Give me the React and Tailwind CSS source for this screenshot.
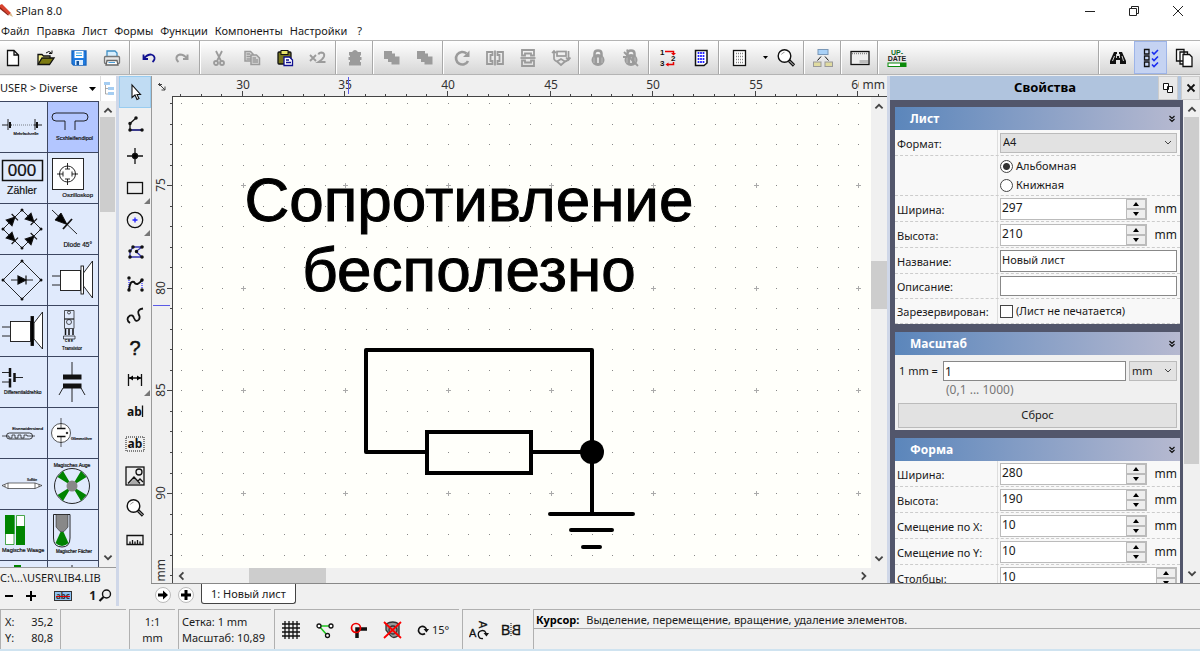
import { useState } from "react";

/* ================= SHARED ================= */

function Icon({ size = 20, children }) {
    return (
        <svg
            width={size}
            height={size}
            viewBox="0 0 20 20"
            fill="none"
            stroke="#111"
            strokeWidth="1.3"
            aria-hidden="true"
            className="shrink-0"
        >
            {children}
        </svg>
    );
}

const CHEVRONS = {
    up: "M2 7 L5 4 L8 7",
    down: "M2 3 L5 6 L8 3",
    left: "M7 2 L4 5 L7 8",
    right: "M4 2 L7 5 L4 8",
};

function Chevron({ dir, size = 12, width = 1.5 }) {
    return (
        <svg width={size} height={size} viewBox="0 0 10 10" fill="none" stroke="#444" strokeWidth={width} aria-hidden="true">
            <path d={CHEVRONS[dir]} />
        </svg>
    );
}

/* ================= TOOLBAR ICONS ================= */

const G = "#9b9b9b";

const magnifier = (
    <>
        <circle cx="8.5" cy="8" r="6.3" fill="#fff" strokeWidth="1.4" />
        <path d="M5.5 6.5 Q6.5 4.5 8.5 4.3" stroke="#999" strokeWidth="1" />
        <path d="M13 12.5 L18 17.5" strokeWidth="3.2" />
        <path d="M13.6 13.1 L17.6 17.1" stroke="#ddd" strokeWidth="1" />
    </>
);

const lock = (
    <>
        <path d="M6.500 8 V5.500 Q6.500 2.500 10 2.500 Q13.500 2.500 13.500 5.500 V8" stroke={G} strokeWidth="2.500" />
        <ellipse cx="10" cy="12" rx="6.500" ry="6" fill={G} stroke="none" />
        <path d="M6 9.500 V15 M14 9.500 V15" stroke="#c4c4c4" strokeWidth="0.800" />
        <path d="M10 9.500 V15" stroke="#f2f2f2" strokeWidth="1.500" />
    </>
);

const TOOLS_LEFT = [
    [
        ["Новый", <path d="M4.500 2.500 H11 L15.500 7 V17.500 H4.500 Z M11 2.500 V7 H15.500" fill="#fff" />],
        ["Открыть", (
            <>
                <path d="M2 16 V6.500 H6 L7.500 8 H14 V10" fill="#f4f08a" />
                <path d="M2 16.500 L6 10 H18 L13.500 16.500 Z" fill="#7c7a10" />
                <path d="M10 5 Q13 2 15.500 5 M16 2.500 V5.500 H13" strokeWidth="1" />
            </>
        )],
        ["Сохранить", (
            <>
                <path d="M3 3 H17 V17 H4.500 L3 15.500 Z" fill="#1f7be0" stroke="#1866c0" />
                <rect x="5.500" y="3" width="9" height="7" fill="#fff" stroke="none" />
                <path d="M7 5 H13 M7 7.500 H13" stroke="#2ba0e8" strokeWidth="1" />
                <rect x="6" y="12" width="8" height="5" fill="#d9ecff" stroke="none" />
                <rect x="7.500" y="13" width="2.500" height="4" fill="#14539c" stroke="none" />
            </>
        )],
        ["Печать", (
            <>
                <path d="M5 9 V3 H13 L15 5 V9 Z" fill="#d7efff" stroke="#3f8fc4" />
                <rect x="2.500" y="8.500" width="15" height="7" rx="1" fill="#e6e6e6" stroke="#777" />
                <path d="M5 12.500 H15 L16 17 H4 Z" fill="#fff" stroke="#666" />
                <path d="M6.500 14.500 H13" stroke="#4aa0dc" strokeWidth="1" />
            </>
        )],
    ],
    [
        ["Отменить", <path d="M4.500 6.500 V11 H9 M5 10.500 Q8 6.500 12 6.500 Q16 7.500 15.500 11 Q15.200 12.500 13.500 14" stroke="#101090" strokeWidth="1.800" />],
        ["Повторить", <path d="M15.500 6.500 V11 H11 M15 10.500 Q12 6.500 8 6.500 Q4 7.500 4.500 11 Q4.800 12.500 6.500 14" stroke={G} strokeWidth="2" />],
    ],
    [
        ["Вырезать", (
            <g stroke={G} strokeWidth="1.800">
                <path d="M7 3 L12 13 M13 3 L8 13" />
                <circle cx="7" cy="15" r="2" />
                <circle cx="13" cy="15" r="2" />
            </g>
        )],
        ["Копировать", (
            <g stroke={G} fill="#d8d8d8" strokeWidth="1.500">
                <path d="M3 3.500 H8.500 L11 6 V13 H3 Z" />
                <path d="M4.500 6 H8 M4.500 8.500 H9 M4.500 11 H9" />
                <path d="M9 7 H14.500 L17.500 10 V16.500 H9 Z" />
                <path d="M10.500 10 H14 M10.500 12 H16 M10.500 14 H16" />
            </g>
        )],
        ["Вставить", (
            <>
                <rect x="3" y="4" width="13" height="12" rx="1" fill="#77751c" />
                <rect x="6" y="2.500" width="7" height="4" fill="#e8e46a" strokeWidth="1" />
                <path d="M9 9 H14.500 L17.500 12 V17.500 H9 Z" fill="#fff" stroke="#101090" />
                <path d="M11 12 H14 M11 14.500 H16" stroke="#101090" />
            </>
        )],
        ["Дублировать", (
            <>
                <path d="M2 7 L8 13 M8 7 L2 13" stroke={G} strokeWidth="1.800" />
                <path d="M10.500 6.500 Q11 4.500 13.500 4.500 Q17 5 16 8.500 Q15 11 10.500 14 H17.500" stroke={G} strokeWidth="2" />
            </>
        )],
    ],
    [
        ["Компонент", <path d="M7 4 Q10 0 13 4 H16 V7.500 H15 V9 H16.500 V12 H15 V14 H16 V17.500 H4 V14 H5 V12 H3.500 V9 H5 V7.500 H4 V4 Z" fill={G} stroke="none" />],
    ],
    [
        ["На передний план", <path d="M2 3 H10 V5.500 H13 V8.500 H17.500 V16.500 H9.500 V14 H6 V11 H2 Z" fill={G} stroke="none" />],
        ["На задний план", <path d="M2 3 H10 V5.500 H13 V8.500 H17.500 V16.500 H9.500 V14 H6 V11 H2 Z" fill={G} stroke="none" />],
    ],
    [
        ["Повернуть", (
            <>
                <path d="M16 13 A6.300 6.300 0 1 1 14.500 5.500" stroke={G} strokeWidth="2.600" />
                <path d="M17.500 2.500 V9 H11 Z" fill={G} stroke="none" />
            </>
        )],
        ["Отразить по горизонтали", (
            <g stroke={G} strokeWidth="1.800">
                <path d="M2 4 H7.500 V7 H5.500 V13 H7.500 V16 H2 Z" />
                <path d="M18 4 H12.500 V7 H14.500 V13 H12.500 V16 H18 Z" />
                <path d="M10 2.500 V17.500" />
            </g>
        )],
        ["Отразить по вертикали", (
            <g stroke={G} strokeWidth="1.800">
                <path d="M4 2 V7.500 H7 V5.500 H13 V7.500 H16 V2 Z" />
                <path d="M4 18 V12.500 H7 V14.500 H13 V12.500 H16 V18 Z" />
                <path d="M2.500 10 H17.500" />
            </g>
        )],
        ["Выравнивание", (
            <g stroke={G} strokeWidth="1.700">
                <rect x="6" y="3.500" width="9" height="4.500" />
                <path d="M6 13.500 L10 11 L14 13.500 L10 17 Z" />
                <path d="M3 3 V11 Q4 13.500 7 13.500 M17.500 3 V11 Q16 13.500 13 13.500 M1 5 L3 3 L5 5 M15 9.500 L17.500 12 L19.500 9.500" />
            </g>
        )],
    ],
    [
        ["Закрепить", lock],
        ["Открепить", (
            <>
                {lock}
                <path d="M3 4 L17 18 M2 9 H6 M6 1.500 L7 5" stroke={G} strokeWidth="1.800" />
            </>
        )],
    ],
    [
        ["Перенумеровать", (
            <>
                <path d="M7 3.500 H15.500 V6 M15.500 14 V16.500 H9" stroke="#e60000" strokeWidth="1.500" />
                <path d="M13 5 H18 L15.500 7.500 Z M10.500 14.500 V18.500 L7.500 16.500 Z" fill="#e60000" stroke="none" />
                <g fill="#111" stroke="none" fontSize="8" fontWeight="700" fontFamily="Liberation Sans, sans-serif">
                    <text x="2" y="7">1</text>
                    <text x="13" y="13">2</text>
                    <text x="2" y="18">3</text>
                </g>
            </>
        )],
        ["Список", (
            <>
                <path d="M4.500 2.500 H16 V15 L13 17.500 H4.500 Z" fill="#fff" strokeWidth="1.500" />
                <path d="M7.500 4 V16 M10 4 V16 M12.500 4 V16" stroke="#2222ff" strokeWidth="1.700" strokeDasharray="2 1" />
            </>
        )],
    ],
];

const TOOLS_MID = [
    ["Структура", (
        <>
            <rect x="5" y="1.500" width="10" height="5" fill="#a9d1f7" stroke="#7a98b8" strokeWidth="1" />
            <path d="M8 8.500 L4.500 12.500 M12 8.500 L15.500 12.500" strokeWidth="1" />
            <rect x="0.500" y="14" width="7.500" height="4.500" fill="#e0dba0" stroke="#999" strokeWidth="1" />
            <rect x="12" y="14" width="7.500" height="4.500" fill="#e0dba0" stroke="#999" strokeWidth="1" />
        </>
    )],
    ["Лист", (
        <>
            <rect x="1" y="3.500" width="18" height="13" fill="#eee" />
            <path d="M2 5.500 H18" stroke="#888" strokeDasharray="1 1" />
            <rect x="9.500" y="12" width="8.500" height="3.500" fill="#bbb" stroke="none" />
        </>
    )],
    ["Обновление", (
        <>
            <g stroke="none" fontSize="7" fontWeight="700" fontFamily="Liberation Sans, sans-serif" textAnchor="middle">
                <text x="10" y="6.500" fill="#0b6b1c">UP-</text>
                <text x="10" y="13" fill="#222">DATE</text>
            </g>
            <rect x="1" y="15" width="18" height="3.500" fill="#fff" stroke="#0a8a0a" strokeWidth="1" />
            <rect x="13" y="15" width="6" height="3.500" fill="#0a8a0a" stroke="none" />
        </>
    )],
];

function ToolButton({ label, active, children }) {
    return (
        <button
            type="button"
            aria-label={label}
            className={
                active
                    ? "flex w-[33px] shrink-0 items-center justify-center border border-[#9db4e8] bg-[#c5d3f2]"
                    : "flex w-[33px] shrink-0 items-center justify-center"
            }
        >
            {children}
        </button>
    );
}

function Separator() {
    return <div className="mx-px w-[2px] shrink-0 border-l border-[#a8a8a8] bg-white" />;
}

function Toolbar() {
    return (
        <div className="flex h-[35px] shrink-0 items-stretch overflow-hidden border-y border-[#b4b4b4] bg-gradient-to-b from-white to-[#d6d6d6]">
            <div className="-ml-1 flex items-stretch">
                {TOOLS_LEFT.map((group, i) => (
                    <div key={i} className="flex">
                        {group.map(([label, drawing]) => (
                            <ToolButton key={label} label={label}>
                                <Icon>{drawing}</Icon>
                            </ToolButton>
                        ))}
                        <Separator />
                    </div>
                ))}
                <ToolButton label="Сетка">
                    <Icon>
                        <rect x="5.500" y="2.500" width="12" height="15" fill="#fff" />
                        <path d="M8 5.500 H16 M8 8.500 H16 M8 11.500 H16 M8 14.500 H16" stroke="#888" strokeDasharray="1 1" />
                    </Icon>
                </ToolButton>
                <button type="button" aria-label="Варианты сетки" className="flex w-[15px] items-center justify-end pr-px">
                    <svg width="5" height="3" viewBox="0 0 5 3" aria-hidden="true"><path d="M0 0 H5 L2.500 3 Z" /></svg>
                </button>
                <ToolButton label="Масштаб">
                    <Icon>{magnifier}</Icon>
                </ToolButton>
                {TOOLS_MID.map(([label, drawing]) => (
                    <div key={label} className="flex">
                        <Separator />
                        <ToolButton label={label}>
                            <Icon>{drawing}</Icon>
                        </ToolButton>
                    </div>
                ))}
            </div>
            <div className="ml-auto flex items-stretch">
                <Separator />
                <ToolButton label="Найти">
                    <Icon>
                        <path d="M6 4 H9 V8 H11 V4 H14 L18 13 V16 H12 V12 H8 V16 H2 V13 Z" fill="#111" stroke="none" />
                        <path d="M4.500 13 L6.500 8 M8.500 6 V10 M11.500 6 V10 M14 8 L15.500 13" stroke="#fff" strokeWidth="0.800" />
                    </Icon>
                </ToolButton>
                <ToolButton label="Свойства" active>
                    <Icon>
                        <path d="M3.500 1.500 H8 V6 H3.500 Z M3.500 8 H8 V12 H3.500 Z M3.500 14 H8 V18.500 H3.500 Z" />
                        <path d="M11 4 L13 6 L17 2 M11 10.500 L13 12.500 L17 8.500 M11 16.500 L13 18.500 L17 14.500" stroke="#1a2cf0" strokeWidth="1.600" />
                    </Icon>
                </ToolButton>
                <ToolButton label="Листы">
                    <Icon>
                        <path d="M2.500 1.500 H10 V13 H2.500 Z M6 4 H13.500 V16 H6 Z" fill="#fff" />
                        <path d="M9 6.500 H15.500 L18 9 V18.500 H9 Z" fill="#fff" />
                    </Icon>
                </ToolButton>
            </div>
        </div>
    );
}

/* ================= COMPONENT LIBRARY ================= */

function T({ x, y, size, anchor = "start", children }) {
    return (
        <text x={x} y={y} fontSize={size} textAnchor={anchor} fill="#111" stroke="#111" strokeWidth="0.2">
            {children}
        </text>
    );
}

const diode = <path d="M-4 -4 L4 0 L-4 4 Z M4 -4.500 V4.500" fill="#000" strokeWidth="1.200" />;

const LIBRARY = [
    ["Mehrfachzelle", (
        <>
            <path d="M2 23 H8 M8 17 V28 M10 23 H12 M34 23 H36 M35 17 V28 M38 23 H42" />
            <path d="M10 20 V26 M37 20 V26" strokeWidth="2" />
            <path d="M13 23 H34" strokeDasharray="1 1" strokeWidth="0.500" />
            <T x="26" y="33" size="4" anchor="middle">Mehrfachzelle</T>
        </>
    )],
    ["Scxhleifendipol", (
        <>
            <path d="M17 28 V19 H8 A4 4 0 0 1 8 11 H36 A4 4 0 0 1 36 19 H27 V28" />
            <T x="45" y="38" size="5.500" anchor="end">Scxhleifendipol</T>
        </>
    )],
    ["Zähler", (
        <>
            <rect x="2.500" y="7.500" width="40" height="20" strokeWidth="1.500" />
            <T x="22" y="23" size="17" anchor="middle">000</T>
            <T x="22" y="41" size="10.500" anchor="middle">Zähler</T>
        </>
    )],
    ["Oszilloskop", (
        <>
            <rect x="4.500" y="5.500" width="31" height="31" fill="#fff" />
            <circle cx="19.500" cy="21" r="8" />
            <path d="M19.500 10 V16 M19.500 26 V32 M9 21 H15 M24 21 H30 M17 16 H22 M17 26 H22 M15 18.500 V23.500 M24 18.500 V23.500" />
            <T x="45" y="44" size="6" anchor="end">Oszilloskop</T>
        </>
    )],
    ["Brückengleichrichter", (
        <>
            <path d="M22 6 L41 25 L22 44 L3 25 Z" />
            <g transform="translate(12 16) rotate(-45)">{diode}</g>
            <g transform="translate(31 15) rotate(45)">{diode}</g>
            <g transform="translate(12 34) rotate(45)">{diode}</g>
            <g transform="translate(31 35) rotate(-45)">{diode}</g>
            <path d="M22 6 h0 M41 25 h0 M22 44 h0 M3 25 h0" strokeWidth="3" strokeLinecap="round" />
        </>
    )],
    ["Diode 45°", (
        <>
            <path d="M4 6 L29 30" />
            <path d="M13 9 L7 16 L19 20.500 Z" fill="#000" />
            <path d="M24 15 L15 25" strokeWidth="1.800" />
            <T x="44" y="43" size="6.500" anchor="end">Diode 45°</T>
        </>
    )],
    ["Gleichrichter", (
        <>
            <path d="M22 6 L41 25 L22 44 L3 25 Z M11 25 H33" />
            <g transform="translate(22 25)">{diode}</g>
            <path d="M22 6 h0 M41 25 h0 M22 44 h0 M3 25 h0" strokeWidth="3" strokeLinecap="round" />
        </>
    )],
    ["Lautsprecher", (
        <g fill="#fff">
            <path d="M4 21 H12 M4 30 H12" />
            <rect x="12.500" y="15.500" width="20" height="20" />
            <rect x="33" y="11" width="2.500" height="28" />
            <path d="M35.500 18 L44.500 6 V43 L35.500 31 Z" />
        </g>
    )],
    ["Hochtöner", (
        <g fill="#fff">
            <path d="M2 21 H10 M2 30 H10" />
            <rect x="10.500" y="15.500" width="20" height="20" />
            <path d="M34 17 L42.500 6 V43 L34 33 Z" />
            <rect x="31" y="10.500" width="2.500" height="29" fill="#000" />
        </g>
    )],
    ["Transistor", (
        <>
            <path d="M16.500 4.500 H26 V13 H16.500 Z M16.500 13 H26 V22.500 H16.500 Z M15.500 30 H27 V33 H15.500 Z" strokeWidth="0.700" />
            <circle cx="21" cy="16" r="2.500" strokeWidth="0.700" />
            <circle cx="21" cy="6.500" r="1.500" strokeWidth="0.700" />
            <path d="M17.500 23 V29 M21 23 V29 M25 23 V29" strokeWidth="1.500" />
            <T x="21" y="36" size="3" anchor="middle">C B E</T>
            <T x="24" y="44" size="4.500" anchor="middle">Transistor</T>
        </>
    )],
    ["Differentialdrehko", (
        <>
            <path d="M2 15.500 H9 M2 25 H9 M15 20.500 H23" />
            <path d="M10 11 V20 M10 21.500 V30.500 M14.500 16 V25" strokeWidth="2.500" />
            <T x="4" y="37" size="4.800">Differentialdrehko</T>
        </>
    )],
    ["Durchführung", (
        <>
            <path d="M24 5 V18 M24 30 V45 M15 31 L11 38 M33 31 L37 38" />
            <path d="M15 20 H33.500 M15 29 H33.500" strokeWidth="5" />
        </>
    )],
    ["Eisenwiderstand", (
        <>
            <rect x="6.500" y="25" width="26" height="6" rx="3" strokeWidth="0.800" />
            <path d="M2 28 H9 V30 H12 V27 H15 V30 H18 V27 H21 V30 H24 V27 H27 V28 H35" strokeWidth="0.700" />
            <T x="43" y="22" size="4.200" anchor="end">Eisenwiderstand</T>
        </>
    )],
    ["Glimmröhre", (
        <>
            <circle cx="13" cy="25" r="9.500" fill="#fff" strokeWidth="0.700" />
            <path d="M13 10 V20 M13 29 V39" strokeWidth="0.700" />
            <path d="M9 20.500 H17.500 M9 28.500 H17.500" strokeWidth="1.600" />
            <circle cx="19" cy="25" r="0.800" fill="#000" />
            <T x="44" y="32" size="4" anchor="end">Glimmröhre</T>
        </>
    )],
    ["Soffitte", (
        <>
            <path d="M8 24 H35 V29.500 H8 Z M8 24 L2 26.500 L8 29.500 M35 24 L42 26.500 L35 29.500 M5 25.500 V28 M39 25.500 V28" fill="#fff" strokeWidth="0.600" />
            <T x="32" y="22" size="3.200" anchor="middle">Soffitte</T>
        </>
    )],
    ["Magisches Auge", (
        <>
            <circle cx="24" cy="27" r="17.500" />
            <path d="M24 27 L9.500 18 L15 12 Z M24 27 L33 12 L38.500 18 Z M24 27 L38.500 36 L33 42 Z M24 27 L15 42 L9.500 36 Z" fill="#008400" stroke="none" />
            <circle cx="24" cy="27" r="5.500" fill="#888" stroke="none" />
            <T x="24" y="8" size="5" anchor="middle">Magisches Auge</T>
        </>
    )],
    ["Magische Waage", (
        <>
            <path d="M5.500 5.500 H14 V34.500 H5.500 Z M16.500 5.500 H24.500 V34.500 H16.500 Z" fill="#fff" stroke="#008400" strokeWidth="0.700" />
            <path d="M5 5 H14.500 V24 H5 Z M16 16 H25 V35 H16 Z" fill="#008400" stroke="none" />
            <T x="2" y="42" size="5.500">Magische Waage</T>
        </>
    )],
    ["Magischer Fächer", (
        <>
            <path d="M5.500 4.500 H22 V28 Q22 37 14 37 Q5.500 37 5.500 28 Z" />
            <path d="M8 4.500 H20 V17 L16 21.500 H12 L8 17 Z" fill="#888" strokeWidth="0.500" />
            <path d="M12.500 22 H15.500 L20.500 33 Q14 39 7.500 33 Z" fill="#008400" stroke="none" />
            <T x="8" y="43" size="4.500">Magischer Fächer</T>
        </>
    )],
    ["Magisches Band", <path d="M14 4 H21 V40 H14 Z" fill="#008400" stroke="none" />],
    ["Antenne", <path d="M24 4 V20" />],
];

function LibraryPanel() {
    return (
        <aside className="flex w-[116px] shrink-0 flex-col">
            <div className="flex h-[25px] shrink-0 items-stretch bg-white">
                <button type="button" className="flex flex-1 items-center justify-between overflow-hidden pr-1 text-[11px] whitespace-nowrap">
                    USER &gt; Diverse
                    <svg width="7" height="4" viewBox="0 0 7 4" aria-hidden="true"><path d="M0 0 H7 L3.500 4 Z" /></svg>
                </button>
                <button type="button" aria-label="Дерево библиотек" className="flex w-4 items-center justify-center border-l border-[#ddd]">
                    <svg width="12" height="14" viewBox="0 0 12 14" fill="#a5cdf2" aria-hidden="true">
                        <path d="M1 0 H7 V3 H1 Z M5 5 H11 V8 H5 Z M5 10 H11 V13 H5 Z" />
                        <path d="M2.500 3 V12 H5 M2.500 6.500 H5" stroke="#888" fill="none" strokeWidth="0.700" />
                    </svg>
                </button>
            </div>
            <div className="flex min-h-0 flex-1 border-b border-[#999]">
                <div className="grid flex-1 auto-rows-[51px] grid-cols-[48px_1fr] overflow-hidden bg-[#e0eafc]">
                    {LIBRARY.map(([name, drawing], i) => (
                        <button
                            key={name}
                            type="button"
                            aria-label={name}
                            className={
                                i === 1
                                    ? "overflow-hidden border-t border-r border-[#3c4660] bg-[#b3c6ff]"
                                    : "overflow-hidden border-t border-r border-[#3c4660]"
                            }
                        >
                            <svg
                                width="48"
                                height="50"
                                viewBox="0 0 48 50"
                                fill="none"
                                stroke="#111"
                                strokeWidth="0.900"
                                className="font-['Liberation_Sans',sans-serif]"
                            >
                                {drawing}
                            </svg>
                        </button>
                    ))}
                </div>
                <div className="flex w-[17px] flex-col items-center bg-[#f0f0f0] py-[3px]">
                    <Chevron dir="up" />
                    <div className="mt-px h-[95px] w-[15px] bg-[#cdcdcd]" />
                    <div className="mt-auto flex"><Chevron dir="down" /></div>
                </div>
            </div>
            <p className="h-[20px] shrink-0 overflow-hidden text-[11px] leading-5 whitespace-nowrap">C:\...\USER\LIB4.LIB</p>
            <div className="flex h-[21px] shrink-0 items-center pb-[5px] pl-[3px]">
                <button type="button" aria-label="Уменьшить" className="flex">
                    <svg width="12" height="12" viewBox="0 0 12 12" stroke="#000" strokeWidth="2"><path d="M2 6 H10" /></svg>
                </button>
                <button type="button" aria-label="Увеличить" className="ml-[10px] flex">
                    <svg width="12" height="12" viewBox="0 0 12 12" stroke="#000" strokeWidth="2"><path d="M1 6 H11 M6 1 V11" /></svg>
                </button>
                <button type="button" className="ml-[17px] h-[10px] w-[18px] border border-[#333] bg-[#8ec2f2] text-[8px] leading-[8px] font-bold text-[#333] line-through decoration-[#d00]">
                    abc
                </button>
                <button type="button" aria-label="Поиск" className="ml-auto flex items-center pr-1 text-[12px] leading-3 font-bold">
                    1
                    <svg width="14" height="14" viewBox="0 0 14 14" fill="none" stroke="#111" strokeWidth="1.400" className="ml-[2px]">
                        <circle cx="8.500" cy="5" r="4" />
                        <path d="M5.500 8 L1.500 12" strokeWidth="2.200" />
                    </svg>
                </button>
            </div>
        </aside>
    );
}

/* ================= DRAWING TOOLS ================= */

const DRAW_TOOLS = [
    ["Курсор", <path d="M7 3 V15.500 L10 13 L12 17.500 L14 16.500 L12 12.500 H15.500 Z" fill="#fff" strokeWidth="1.100" />],
    ["Угол", (
        <>
            <path d="M11 4 L5 9.500 V16 H17" />
            <path d="M5 16 H17" stroke="#3333b0" />
            <path d="M11 4 h0 M5 9.500 h0 M5 16 h0 M17 16 h0" strokeWidth="3.500" strokeLinecap="round" />
        </>
    )],
    ["Узел", (
        <>
            <path d="M2 10 H18 M10 2 V18" />
            <circle cx="10" cy="10" r="2.500" fill="#000" />
        </>
    )],
    ["Прямоугольник", <rect x="2.500" y="4.500" width="15" height="11" />, true],
    ["Окружность", (
        <>
            <circle cx="10" cy="10" r="7.700" />
            <path d="M7.500 10 H12.500 M10 7.500 V12.500" stroke="#2020ff" />
        </>
    ), true],
    ["Многоугольник", (
        <>
            <path d="M8 5 H17 L11 9.500 L17 15 H5 V10 Z" stroke="#3333b0" />
            <path d="M8 5 h0 M17 5 h0 M11.500 9.500 h0 M17 15 h0 M5 15 h0 M5 9 h0" strokeWidth="3.500" strokeLinecap="round" />
        </>
    )],
    ["Безье", (
        <>
            <path d="M4 4 V15 M17 5 V16" stroke="#3333ff" strokeDasharray="1 1" />
            <path d="M4 16 Q5 6 9 8 Q12 13 17 6" strokeWidth="2" />
            <path d="M4 4 h0 M4 16 h0 M17 6 h0 M17 16 h0" strokeWidth="3.500" strokeLinecap="round" />
        </>
    )],
    ["Кривая", <path d="M5 17 Q0 13 5 9.500 Q8 8.500 9 12 Q11 17 14 13.500 Q15.500 11 13.500 8 Q12 3.500 18 2.500" strokeWidth="1.800" />],
    ["Справка", (
        <text x="10" y="16.500" fontSize="20" textAnchor="middle" fill="#111" strokeWidth="0.500" fontFamily="Liberation Sans, sans-serif">?</text>
    )],
    ["Размер", (
        <>
            <path d="M3.500 4 V16 M16.500 4 V16 M4 8 H16" />
            <path d="M4 8 L8 5.500 V10.500 Z M16 8 L12 5.500 V10.500 Z" fill="#000" stroke="none" />
        </>
    ), true],
    ["Текст", (
        <>
            <text x="2" y="14" fontSize="12" fontWeight="700" fill="#111" stroke="none">ab</text>
            <path d="M17.500 3.500 V15" />
        </>
    )],
    ["Текстовый блок", (
        <>
            <rect x="1" y="3" width="18" height="14" strokeWidth="1" strokeDasharray="1 1" />
            <text x="10" y="14" fontSize="12" fontWeight="700" textAnchor="middle" fill="#111" stroke="none">ab</text>
        </>
    )],
    ["Изображение", (
        <>
            <rect x="1" y="1" width="18" height="18" fill="#eee" />
            <circle cx="14" cy="6" r="3" />
            <path d="M4 18 L9.500 12 L15 18 Z" fill="#aaa" stroke="none" />
            <path d="M3 17.500 L9 11 L15 17.500 M13 15 L15 13 L18 16" />
        </>
    )],
    ["Лупа", magnifier],
    ["Измерение", <path d="M2 5.500 H18 V14.500 H2 Z M5 14 V11.500 M7.500 14 V10 M10 14 V11.500 M12.500 14 V10 M15 14 V11.500" />],
];

function DrawTools() {
    return (
        <nav className="flex w-8 shrink-0 flex-col" aria-label="Инструменты">
            {DRAW_TOOLS.map(([label, drawing, more], i) => (
                <button
                    key={label}
                    type="button"
                    aria-label={label}
                    className={
                        i === 0
                            ? "relative flex h-8 shrink-0 items-center justify-center border border-[#98ccf0] bg-[#c0dcf3]"
                            : "relative flex h-8 shrink-0 items-center justify-center"
                    }
                >
                    <Icon size={20}>{drawing}</Icon>
                    {more && (
                        <svg width="6" height="6" viewBox="0 0 6 6" className="absolute right-[1px] bottom-0" aria-hidden="true">
                            <path d="M6 0 V6 H0 Z" fill="#777" />
                        </svg>
                    )}
                </button>
            ))}
        </nav>
    );
}

/* ================= SHEET ================= */

const STEP = 20.53; // one grid unit on screen
const COLS = 80;
const ROWS = 60;
const FIRST_X = 8;
const FIRST_Y = 6;

const at = (first, i) => Math.round(first + i * STEP);

// column 3 and row 4 fall on a multiple of five
const isMajorCol = (i) => i % 5 === 3;
const isMajorRow = (i) => i % 5 === 4;

function gridPaths() {
    let dots = "";
    let crosses = "";
    for (let c = 0; c < COLS; c++) {
        for (let r = 0; r < ROWS; r++) {
            const x = at(FIRST_X, c);
            const y = at(FIRST_Y, r);
            if (isMajorCol(c) && isMajorRow(r)) {
                crosses += `M${x - 2} ${y + 0.5}h5M${x + 0.5} ${y - 2}v5`;
            } else {
                dots += `M${x} ${y + 0.5}h1`;
            }
        }
    }
    return { dots, crosses };
}

const GRID = gridPaths();

const range = (n) => Array.from({ length: n }, (_, i) => i);

function TopRuler() {
    return (
        <svg width="100%" height="21" className="block text-[12px]" role="img" aria-label="Горизонтальная линейка">
            <path
                d={range(COLS).map((i) => `M${at(FIRST_X, i) + 0.5} 21v${isMajorCol(i) ? -6 : -3}`).join("")}
                stroke="#444"
            />
            {range(COLS).filter(isMajorCol).slice(0, 7).map((i, n) => (
                <text key={i} x={at(FIRST_X, i) + 1} y="13" textAnchor="middle" fill="#333">
                    {30 + n * 5}
                </text>
            ))}
            <path d="M0 20.500 H4000" stroke="#444" />
            <path d="M176.500 1 V18" stroke="#5a5ae6" />
        </svg>
    );
}

function SideRuler() {
    return (
        <svg width="21" height="100%" className="block text-[12px]" role="img" aria-label="Вертикальная линейка">
            <path
                d={range(ROWS).map((i) => `M21 ${at(FIRST_Y, i) + 0.5}h${isMajorRow(i) ? -6 : -3}`).join("")}
                stroke="#444"
            />
            {range(ROWS).filter(isMajorRow).slice(0, 4).map((i, n) => (
                <text
                    key={i}
                    x="0"
                    y="0"
                    textAnchor="middle"
                    fill="#333"
                    transform={`translate(13 ${at(FIRST_Y, i)}) rotate(-90)`}
                >
                    {75 + n * 5}
                </text>
            ))}
            <path d="M20.500 0 V4000" stroke="#444" />
            <path d="M1 208.500 H18" stroke="#5a5ae6" />
        </svg>
    );
}

function Sheet() {
    return (
        <svg width="100%" height="100%" className="block bg-[#fffffa]" role="img" aria-label="Лист">
            <path d={GRID.dots} stroke="#888" />
            <path d={GRID.crosses} stroke="#aaa" />
            <g fontFamily="Liberation Sans, Arial, sans-serif" fontSize="62" textAnchor="middle" stroke="#000" strokeWidth="1">
                <text x="296" y="124">Сопротивление</text>
                <text x="296" y="194">бесполезно</text>
            </g>
            <g fill="none" stroke="#000" strokeWidth="4" strokeLinecap="round" strokeLinejoin="round">
                <path d="M254 355 H193 V253 H419 V417 M358 355 H419" />
                <rect x="254" y="335" width="104" height="41" strokeLinejoin="miter" />
                <path d="M377 417 H460 M398 433 H439 M410 450 H427" />
            </g>
            <circle cx="419" cy="355" r="12" />
        </svg>
    );
}

function Workspace() {
    return (
        <main className="flex min-w-0 flex-1 flex-col border-l border-[#999]">
            <div className="flex h-[21px] shrink-0">
                <div className="flex w-5 shrink-0 items-center justify-center">
                    <svg width="8" height="8" viewBox="0 0 8 8" stroke="#444" fill="none" aria-hidden="true">
                        <path d="M0 1.500 H4 M1.500 0 V3 M2 2 L7 7 M7 3.500 V7 H3.500" />
                    </svg>
                </div>
                <div className="relative min-w-0 flex-1">
                    <TopRuler />
                    <span className="absolute top-0 right-0 bg-[#f0f0f0] pr-[2px] pl-1 text-[12px] leading-[17px] text-[#333]">mm</span>
                </div>
            </div>
            <div className="flex min-h-0 flex-1">
                <div className="relative w-[21px] shrink-0 overflow-hidden">
                    <SideRuler />
                    <span className="absolute bottom-[2px] left-0 rotate-180 bg-[#f0f0f0] text-[12px] leading-[17px] text-[#333] [writing-mode:vertical-rl]">mm</span>
                </div>
                <div className="flex min-w-0 flex-1 flex-col">
                    <div className="min-h-0 flex-1"><Sheet /></div>
                    <div className="flex h-[15px] shrink-0 items-center px-[2px]">
                        <Chevron dir="left" />
                        <div className="ml-[9%] h-full w-[11%] bg-[#cdcdcd]" />
                        <div className="ml-auto flex"><Chevron dir="right" /></div>
                    </div>
                </div>
                <div className="flex w-[16px] shrink-0 flex-col items-center pt-[3px] pb-[18px]">
                    <Chevron dir="up" />
                    <div className="min-h-0 flex-[150]" />
                    <div className="h-12 w-full bg-[#cdcdcd]" />
                    <div className="min-h-0 flex-[246]" />
                    <Chevron dir="down" />
                </div>
            </div>
        </main>
    );
}

/* ================= PROPERTIES ================= */

function Section({ title, children }) {
    return (
        <section className="mb-2 shrink-0 bg-[#f8f8f8]">
            <h3 className="flex h-[23px] items-center justify-between bg-gradient-to-r from-[#5b86bb] to-[#b6b9d0] pr-1 pl-[15px] text-[12px] font-bold text-white">
                {title}
                <button type="button" aria-label="Свернуть" className="flex">
                    <svg width="8" height="8" viewBox="0 0 8 8" fill="none" stroke="#111" strokeWidth="1.200">
                        <path d="M1.500 1 L4 3.500 L6.500 1 M1.500 4 L4 6.500 L6.500 4" />
                    </svg>
                </button>
            </h3>
            {children}
        </section>
    );
}

function Row({ label, htmlFor, tall, short, children }) {
    const height = tall ? "h-[40px]" : short ? "h-[25px]" : "h-[26px]";
    return (
        <div className={`flex ${height} border-b border-dashed border-[#ccc] text-[11px]`}>
            <label htmlFor={htmlFor} className="flex w-[103px] shrink-0 items-center overflow-hidden border-r border-[#ddd] pt-[3px] pl-[2px] whitespace-nowrap">
                {label}
            </label>
            <div className="flex min-w-0 flex-1 items-center gap-[3px] pr-[3px] pl-[2px]">{children}</div>
        </div>
    );
}

function Spinner({ id, value, unit }) {
    const [text, setText] = useState(value);
    const step = (by) => setText((t) => String(Number(t) + by));

    return (
        <>
            <div className="flex h-[22px] min-w-0 flex-1 border border-[#bbb] bg-white">
                <input
                    id={id}
                    value={text}
                    onChange={(e) => setText(e.target.value)}
                    className="w-full min-w-0 flex-1 bg-white px-px pb-[2px] text-[12px] outline-none"
                />
                <div className="flex w-[20px] flex-col">
                    <button type="button" aria-label="Больше" onClick={() => step(1)} className="flex flex-1 items-center justify-center border border-[#bbb] bg-[#eee]">
                        <svg width="6" height="4" viewBox="0 0 6 4"><path d="M0 4 L3 0 L6 4 Z" /></svg>
                    </button>
                    <button type="button" aria-label="Меньше" onClick={() => step(-1)} className="flex flex-1 items-center justify-center border border-[#bbb] bg-[#eee]">
                        <svg width="6" height="4" viewBox="0 0 6 4"><path d="M0 0 L3 4 L6 0 Z" /></svg>
                    </button>
                </div>
            </div>
            {unit && <span className="w-[27px] text-right text-[12px]">{unit}</span>}
        </>
    );
}

function Properties() {
    const [orientation, setOrientation] = useState("landscape");

    const radio =
        "h-[13px] w-[13px] shrink-0 appearance-none rounded-full border border-[#444] bg-white checked:bg-[radial-gradient(circle,#333_3px,#fff_4px)]";

    return (
        <aside className="flex w-[310px] shrink-0 flex-col">
            <div className="flex h-6 shrink-0 items-stretch bg-[#b0c4de]">
                <div className="w-[42px]" />
                <h2 className="flex flex-1 items-center justify-center text-[13px] font-bold text-black">Свойства</h2>
                <button type="button" aria-label="Открепить панель" className="flex w-[20px] items-center justify-center border border-[#ccc] bg-[#e8e8e8]">
                    <svg width="12" height="12" viewBox="0 0 12 12" fill="#fff" stroke="#111">
                        <path d="M1.500 1.500 H6.500 V7.500 H1.500 Z M5.500 4.500 H10.500 V10.500 H5.500 Z" />
                    </svg>
                </button>
                <button type="button" aria-label="Закрыть панель" className="ml-[3px] flex w-[19px] items-center justify-center border border-[#ccc] bg-[#e8e8e8]">
                    <svg width="10" height="10" viewBox="0 0 10 10" stroke="#111" strokeWidth="1.800"><path d="M1.500 1.500 L8.500 8.500 M8.500 1.500 L1.500 8.500" /></svg>
                </button>
            </div>

            <div className="flex min-h-0 flex-1">
                <div className="flex min-w-0 flex-1 flex-col overflow-hidden bg-[#52566b] pt-[7px] pr-[3px] pl-[5px]">
                    {/* SHEET */}
                    <Section title="Лист">
                        <Row label="Формат:" htmlFor="format">
                            <div className="relative flex-1">
                                <select id="format" defaultValue="A4" className="h-[20px] w-full appearance-none border border-[#bbb] bg-[#e2e2e2] px-[2px]">
                                    <option>A4</option>
                                    <option>A3</option>
                                </select>
                                <span className="pointer-events-none absolute top-[5px] right-1"><Chevron dir="down" size={10} width={1} /></span>
                            </div>
                        </Row>
                        <Row label="" tall>
                            <div className="flex flex-col">
                                <label className="flex h-[19px] items-center gap-[3px]">
                                    <input type="radio" name="orientation" checked={orientation === "landscape"} onChange={() => setOrientation("landscape")} className={radio} />
                                    Альбомная
                                </label>
                                <label className="flex h-[19px] items-center gap-[3px]">
                                    <input type="radio" name="orientation" checked={orientation === "portrait"} onChange={() => setOrientation("portrait")} className={radio} />
                                    Книжная
                                </label>
                            </div>
                        </Row>
                        <Row label="Ширина:" htmlFor="sheet-w"><Spinner id="sheet-w" value="297" unit="mm" /></Row>
                        <Row label="Высота:" htmlFor="sheet-h"><Spinner id="sheet-h" value="210" unit="mm" /></Row>
                        <Row label="Название:" htmlFor="sheet-name">
                            <input id="sheet-name" defaultValue="Новый лист" className="h-[22px] w-full border border-[#888] bg-white px-px pb-[2px]" />
                        </Row>
                        <Row label="Описание:" htmlFor="sheet-note" short>
                            <input id="sheet-note" className="h-[20px] w-full border border-[#888] bg-white px-px" />
                        </Row>
                        <Row label="Зарезервирован:" htmlFor="reserved" short>
                            <input id="reserved" type="checkbox" className="h-[13px] w-[13px] shrink-0 appearance-none border border-[#444] bg-white checked:bg-[#333]" />
                            <span className="whitespace-nowrap">(Лист не печатается)</span>
                        </Row>
                    </Section>

                    {/* SCALE */}
                    <Section title="Масштаб">
                        <div className="flex h-[75px] flex-col bg-[#f0f0f0] px-[3px] pt-[6px] text-[11px]">
                            <div className="flex items-center gap-[3px]">
                                <label htmlFor="scale" className="w-[42px] shrink-0 pl-px whitespace-nowrap">1 mm =</label>
                                <input id="scale" defaultValue="1" className="h-[20px] min-w-0 flex-1 border border-[#888] bg-white px-px text-[12px]" />
                                <div className="relative">
                                    <select aria-label="Единицы" className="h-[20px] w-[48px] appearance-none border border-[#bbb] bg-[#e2e2e2] px-[2px]">
                                        <option>mm</option>
                                        <option>cm</option>
                                    </select>
                                    <span className="pointer-events-none absolute top-[5px] right-1"><Chevron dir="down" size={10} width={1} /></span>
                                </div>
                            </div>
                            <span className="pl-[48px] text-[12px] leading-[17px] text-[#777]">(0,1 ... 1000)</span>
                            <button type="button" className="mt-[5px] h-[25px] border border-[#bbb] bg-[#e2e2e2]">Сброс</button>
                        </div>
                    </Section>

                    {/* FORM */}
                    <Section title="Форма">
                        <Row label="Ширина:" htmlFor="form-w"><Spinner id="form-w" value="280" unit="mm" /></Row>
                        <Row label="Высота:" htmlFor="form-h"><Spinner id="form-h" value="190" unit="mm" /></Row>
                        <Row label="Смещение по X:" htmlFor="form-x"><Spinner id="form-x" value="10" unit="mm" /></Row>
                        <Row label="Смещение по Y:" htmlFor="form-y"><Spinner id="form-y" value="10" unit="mm" /></Row>
                        <Row label="Столбцы:" htmlFor="form-cols"><Spinner id="form-cols" value="10" /></Row>
                    </Section>
                </div>
                <div className="flex w-[17px] shrink-0 flex-col items-center bg-[#f0f0f0] py-[3px]">
                    <Chevron dir="up" />
                    <div className="mt-[2px] h-[347px] w-[15px] bg-[#cdcdcd]" />
                    <div className="mt-auto flex"><Chevron dir="down" /></div>
                </div>
            </div>
        </aside>
    );
}

/* ================= BOTTOM BARS ================= */

function SheetTabs() {
    return (
        <div className="flex h-[26px] shrink-0 items-start gap-[7px] border-t border-[#888] pl-1">
            <button type="button" aria-label="К листу" className="mt-[3px] flex h-4 w-4 items-center justify-center rounded-full border border-[#bbb] bg-white">
                <svg width="12" height="12" viewBox="0 0 12 12" className="shrink-0"><path d="M1 4.500 H6 V1.500 L11 6 L6 10.500 V7.500 H1 Z" /></svg>
            </button>
            <button type="button" aria-label="Добавить лист" className="mt-[3px] flex h-4 w-4 items-center justify-center rounded-full border border-[#bbb] bg-white">
                <svg width="12" height="12" viewBox="0 0 12 12" stroke="#000" strokeWidth="3" className="shrink-0"><path d="M1 6 H11 M6 1 V11" /></svg>
            </button>
            <button type="button" className="h-[20px] rounded-b-[3px] border border-t-0 border-[#444] bg-white px-[9px] text-[11px] leading-[19px]">
                1: Новый лист
            </button>
        </div>
    );
}

function StatusBar() {
    const cell = "border-t border-l border-[#b0b0b0] text-[11px] leading-4";

    return (
        <footer className="flex h-[40px] shrink-0 gap-[3px] overflow-hidden">
            <div className={`${cell} grid w-[57px] shrink-0 grid-cols-[auto_auto] content-center justify-between px-1`}>
                <span>X:</span>
                <span className="text-right">35,2</span>
                <span>Y:</span>
                <span className="text-right">80,8</span>
            </div>
            <div className={`${cell} w-[66px] shrink-0`} />
            <div className={`${cell} flex w-[46px] shrink-0 flex-col justify-center text-center`}>
                <span>1:1</span>
                <span>mm</span>
            </div>
            <div className={`${cell} flex w-[93px] shrink-0 flex-col justify-center pl-[3px] whitespace-nowrap`}>
                <span>Сетка: 1 mm</span>
                <span>Масштаб: 10,89</span>
            </div>
            <div className={`${cell} flex w-[185px] shrink-0 items-center gap-[14px] pl-[6px]`}>
                <button type="button" aria-label="Привязка к сетке">
                    <Icon><path d="M4 1 V19 M8 1 V19 M12 1 V19 M16 1 V19 M1 4 H19 M1 8 H19 M1 12 H19 M1 16 H19" /></Icon>
                </button>
                <button type="button" aria-label="Соединения">
                    <Icon>
                        <path d="M4 6 H15 M4 6 L12 15" stroke="#1cc41c" strokeWidth="1.600" />
                        <circle cx="4" cy="6" r="2" fill="#fff" />
                        <circle cx="16" cy="6" r="2" fill="#fff" />
                        <circle cx="12.500" cy="15.500" r="2" fill="#fff" />
                    </Icon>
                </button>
                <button type="button" aria-label="Захват">
                    <Icon>
                        <path d="M8 18 V9 H18" strokeWidth="3.500" />
                        <circle cx="7" cy="8" r="4.500" stroke="#e00" strokeWidth="1.700" />
                    </Icon>
                </button>
                <button type="button" aria-label="Группы">
                    <Icon>
                        <path d="M3 4 Q10 0 16 4 V15 Q10 20 7 15 L3 10 Z" fill="#999" stroke="#333" />
                        <circle cx="10" cy="10" r="4" stroke="#333" />
                        <path d="M1 2 L18 18 M18 2 L1 18" stroke="#f00" strokeWidth="1.800" />
                    </Icon>
                </button>
                <button type="button" className="flex items-center gap-[3px]">
                    <svg width="12" height="12" viewBox="0 0 12 12" fill="none" stroke="#111" strokeWidth="1.600" aria-hidden="true">
                        <path d="M8 9.500 A4 4 0 1 1 9.500 6" />
                        <path d="M6.500 5 H12 L9.500 8.500 Z" fill="#111" stroke="none" />
                    </svg>
                    15°
                </button>
            </div>
            <div className={`${cell} flex w-[68px] shrink-0 items-center gap-3 pl-[6px]`}>
                <button type="button" aria-label="Поворот текста">
                    <Icon>
                        <g fill="#111" stroke="#111" strokeWidth="0.300" fontSize="11" fontFamily="Liberation Sans, sans-serif">
                            <text x="0" y="17">A</text>
                            <text transform="translate(10 1) rotate(90)">A</text>
                        </g>
                        <path d="M14 18.500 A4 4 0 1 1 17 13" />
                        <path d="M14.500 13 H20 L17.500 16.500 Z" fill="#111" stroke="none" />
                    </Icon>
                </button>
                <button type="button" aria-label="Отражение текста">
                    <Icon>
                        <g fill="#111" stroke="#111" strokeWidth="0.300" fontSize="14" fontFamily="Liberation Sans, sans-serif">
                            <text x="0" y="15">B</text>
                            <text transform="translate(20 15) scale(-1 1)">B</text>
                        </g>
                        <path d="M10 3 V17" strokeWidth="1" strokeDasharray="1 1" />
                    </Icon>
                </button>
            </div>
            <div className={`${cell} flex min-w-0 flex-1 flex-col`}>
                <p className="h-[19px] border-b border-[#aaa] pl-[2px] leading-[19px] whitespace-nowrap">
                    <b className="mr-[7px] text-black">Курсор:</b>
                    Выделение, перемещение, вращение, удаление элементов.
                </p>
            </div>
        </footer>
    );
}

/* ================= WINDOW ================= */

const MENU = ["Файл", "Правка", "Лист", "Формы", "Функции", "Компоненты", "Настройки"];

export default function App() {
    return (
        <div className="flex h-screen flex-col overflow-hidden bg-[#f0f0f0] font-['Noto_Sans',sans-serif] text-[#1a1a1a]">
            <header className="flex h-[22px] shrink-0 items-center justify-between bg-white">
                <div className="flex items-center gap-[3px] text-[11px]">
                    <svg width="13" height="14" viewBox="0 0 13 14" aria-hidden="true">
                        <path d="M0 1 L2 0 L11 9 L9 11 L0 4 Z" fill="#d8432e" />
                        <path d="M0 3 L9 11 L8 11.500 L0 5 Z" fill="#8c1f14" />
                        <path d="M11 9 L13 13 L9 11 Z" fill="#d9b98a" />
                    </svg>
                    <h1>sPlan 8.0</h1>
                </div>
                <div className="flex items-center gap-[32px] pr-4">
                    <button type="button" aria-label="Свернуть окно">
                        <svg width="12" height="12" viewBox="0 0 12 12" stroke="#222"><path d="M1 6.500 H11" /></svg>
                    </button>
                    <button type="button" aria-label="Восстановить окно">
                        <svg width="12" height="12" viewBox="0 0 12 12" stroke="#222" fill="none"><path d="M1.500 3.500 H8.500 V10.500 H1.500 Z M3.500 3.500 V1.500 H10.500 V8.500 H8.500" /></svg>
                    </button>
                    <button type="button" aria-label="Закрыть окно">
                        <svg width="12" height="12" viewBox="0 0 12 12" stroke="#222"><path d="M1 1 L11 11 M11 1 L1 11" /></svg>
                    </button>
                </div>
            </header>
            <nav className="flex h-[18px] shrink-0 items-center gap-[7px] bg-white pl-px text-[11px]" aria-label="Меню">
                {MENU.map((item) => (
                    <button key={item} type="button">{item}</button>
                ))}
                <button type="button" className="ml-[3px]">?</button>
            </nav>

            <Toolbar />

            <div className="mt-px flex min-h-0 flex-1">
                <LibraryPanel />
                <div className="mb-[3px] w-[3px] shrink-0 bg-[#cfd7e8]" />
                <DrawTools />
                <div className="flex min-w-0 flex-1 flex-col">
                    <div className="flex min-h-0 flex-1">
                        <Workspace />
                        <div className="w-[3px] shrink-0 bg-[#cfd7e8]" />
                        <Properties />
                    </div>
                    <SheetTabs />
                </div>
            </div>

            <StatusBar />
            <div className="h-[2px] shrink-0 bg-[#cfe3f0]" />
        </div>
    );
}
